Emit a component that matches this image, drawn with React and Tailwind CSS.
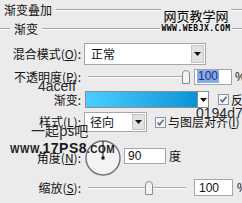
const cjk = { fontFamily: '"Noto Sans CJK SC", "Liberation Sans", sans-serif' };
const latin = { fontFamily: '"Liberation Sans", Arial, sans-serif' };

function Arrow() {
  return (
    <svg width="7" height="4" viewBox="0 0 7 4">
      <path d="M0 0H7L3.5 4Z" fill="#111" />
    </svg>
  );
}

function DropButton({ className = "" }) {
  return (
    <div className={"flex items-center justify-center bg-[#e2e2e2] border border-[#c4c4c4] " + className}>
      <Arrow />
    </div>
  );
}

function Check() {
  return (
    <div className="w-[11px] h-[11px] bg-[#f4f4f4] border border-[#8a96a8] flex items-center justify-center">
      <svg width="9" height="9" viewBox="0 0 9 9">
        <path d="M1.5 4.5L3.5 6.8L7.5 1.8" stroke="#5a6a8a" strokeWidth="1.6" fill="none" />
      </svg>
    </div>
  );
}

function Thumb() {
  return (
    <svg width="8" height="14" viewBox="0 0 8 14">
      <path d="M0.5 13.5V4Q0.5 0.5 4 0.5Q7.5 0.5 7.5 4V13.5Z" fill="#f2f2f2" stroke="#8c8c8c" />
    </svg>
  );
}

function Slider({ width, pos }) {
  return (
    <div className="relative h-[16px]" style={{ width }}>
      <div className="absolute left-0 right-0 top-[7px] h-0 border-t border-[#a8a8a8] border-b border-b-white" />
      <div className="absolute top-[1px]" style={{ left: pos }}>
        <Thumb />
      </div>
    </div>
  );
}

function Label({ children }) {
  return (
    <div className="w-[81px] text-right text-[12px] leading-none text-[#111]" style={cjk}>
      {children}
    </div>
  );
}

function Etch({ className = "" }) {
  return <div className={"h-0 border-t border-[#a3a3a3] border-b border-b-white " + className} />;
}

export default function App() {
  return (
    <div className="relative w-[242px] h-[203px] overflow-hidden bg-[#ebebeb] text-[#111]" style={cjk}>
      {/* title */}
      <div className="flex items-center h-[20px]">
        <span className="pl-[4px] text-[12px] leading-none">渐变叠加</span>
        <Etch className="flex-1 ml-[4px]" />
      </div>

      {/* group header */}
      <div className="flex items-center h-[18px]">
        <Etch className="w-[10px]" />
        <span className="px-[4px] text-[12px] leading-none">渐变</span>
        <Etch className="flex-1" />
      </div>

      {/* blend mode */}
      <div className="flex items-center h-[22px] mt-[5px] *:shrink-0">
        <Label>混合模式(<u>O</u>):</Label>
        <div className="ml-[3px] w-[122px] h-[22px] bg-white border border-[#a6a6a6] flex items-center justify-between pl-[6px] pr-[1px]">
          <span className="text-[12px] leading-none">正常</span>
          <DropButton className="w-[13px] h-[18px]" />
        </div>
      </div>

      {/* opacity */}
      <div className="flex items-center h-[17px] mt-[3px] *:shrink-0">
        <Label>不透明度(<u>P</u>):</Label>
        <div className="ml-[7px]">
          <Slider width={96} pos={94} />
        </div>
        <div className="ml-[10px] w-[38px] h-[16px] bg-white border border-[#a6a6a6] flex items-center pl-[2px]">
          <span className="bg-[#86ace6] text-[#1b2f8a] text-[12px] leading-[13px] px-[1px]" style={latin}>100</span>
        </div>
        <span className="ml-[3px] text-[12px] leading-none" style={latin}>%</span>
      </div>

      {/* gradient */}
      <div className="flex items-center h-[17px] mt-[6px] *:shrink-0">
        <Label>渐变:</Label>
        <div className="ml-[4px] w-[113px] h-[17px] border border-[#8e8e8e] bg-gradient-to-r from-[#4aceff] to-[#0194d7]" />
        <div className="w-[11px] h-[17px] bg-white border border-[#8e8e8e] border-l-0 flex items-center justify-center">
          <Arrow />
        </div>
        <div className="ml-[9px]"><Check /></div>
        <span className="ml-[2px] text-[12px] leading-none whitespace-nowrap">反向</span>
      </div>

      {/* style */}
      <div className="flex items-center h-[20px] mt-[4px] *:shrink-0">
        <Label>样式(<u>L</u>):</Label>
        <div className="ml-[3px] w-[63px] h-[20px] bg-white border border-[#a6a6a6] flex items-center justify-between pl-[5px] pr-[1px]">
          <span className="text-[12px] leading-none">径向</span>
          <DropButton className="w-[13px] h-[16px]" />
        </div>
        <div className="ml-[8px]"><Check /></div>
        <span className="ml-[2px] text-[12px] leading-none whitespace-nowrap">与图层对齐(<u>I</u>)</span>
      </div>

      {/* angle */}
      <div className="flex items-center h-[35px] mt-[8px] *:shrink-0">
        <Label>角度(<u>N</u>):</Label>
        <div className="ml-[4px] w-[36px] h-[36px]">
          <svg width="36" height="36" viewBox="0 0 36 36">
            <circle cx="18" cy="18" r="17" fill="#f3f3f3" stroke="#6e6e78" strokeWidth="1.4" />
            <line x1="18" y1="18" x2="18" y2="1" stroke="#111" strokeWidth="1" />
            <rect x="16.5" y="16.5" width="3" height="3" fill="#111" />
          </svg>
        </div>
        <div className="ml-[3px] w-[42px] h-[16px] bg-white border border-[#a6a6a6] flex items-center pl-[3px] -mt-[3px]">
          <span className="text-[12px] leading-none" style={latin}>90</span>
        </div>
        <span className="ml-[3px] text-[12px] leading-none -mt-[3px]">度</span>
      </div>

      {/* scale */}
      <div className="flex items-center h-[17px] mt-[4px] *:shrink-0">
        <Label>缩放(<u>S</u>):</Label>
        <div className="ml-[7px]">
          <Slider width={98} pos={57} />
        </div>
        <div className="ml-[8px] w-[39px] h-[17px] bg-white border border-[#a6a6a6] flex items-center pl-[4px]">
          <span className="text-[12px] leading-none" style={latin}>100</span>
        </div>
        <span className="ml-[4px] text-[12px] leading-none" style={latin}>%</span>
      </div>

      {/* watermarks and annotations */}
      <div className="absolute left-[160px] top-[8px] w-[72px] flex flex-col items-center">
        <span className="bg-[#ebebeb] text-[13px] leading-[15px] text-black px-[2px]">网页教学网</span>
        <span className="bg-[#ebebeb] text-[8px] leading-[9px] font-bold tracking-[0.5px] text-black mt-[1px] px-[1px]" style={{ fontFamily: '"DejaVu Sans Mono", monospace' }}>WWW.WEBJX.COM</span>
      </div>

      <span className="absolute left-[38px] top-[79px] text-[14px] leading-none text-[#2a2a2a]" style={latin}>4aceff</span>
      <span className="absolute left-[196px] top-[106px] text-[14px] leading-none text-[#2a2a2a]" style={latin}>0194d7</span>
      <span className="absolute left-[31px] top-[123px] text-[14px] leading-none text-[#2a2a2a]">一起ps吧</span>
      <span className="absolute left-[10px] top-[140px] leading-none text-[#1a1a1a] font-bold whitespace-nowrap tracking-[0.5px]" style={latin}>
        <span className="text-[10px]">WWW.</span>
        <span className="text-[14px]">17PS8</span>
        <span className="text-[10px]">.COM</span>
      </span>
    </div>
  );
}
